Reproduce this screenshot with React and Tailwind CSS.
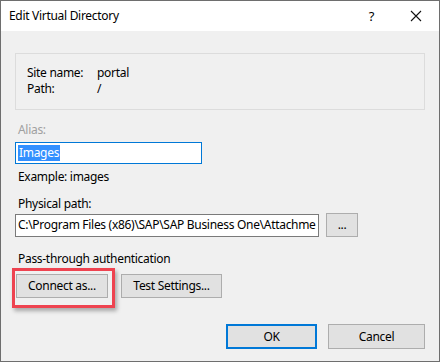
import React from "react"

function Button({ children, className = "", primary = false }) {
  return (
    <div
      className={`flex items-center justify-center bg-[#e1e1e1] text-black ${
        primary ? "border-2 border-[#0078d7]" : "border border-[#adadad]"
      } ${className}`}
    >
      {children}
    </div>
  )
}

export default function App() {
  return (
    <div
      className="w-[440px] h-[362px] bg-[#f0f0f0] border border-[#6e6e6e] text-[12px] leading-[16px] tracking-[-0.3px] text-black flex flex-col overflow-hidden"
      style={{ fontFamily: '"Noto Sans", "Liberation Sans", sans-serif' }}
    >
      {/* Title bar */}
      <div className="h-[30px] bg-white flex items-center shrink-0">
        <span className="ml-[8px] text-[12px]">Edit Virtual Directory</span>
        <span className="ml-auto mr-[36px] text-[13px]">?</span>
        <svg className="mr-[17px]" width="12" height="12" viewBox="0 0 12 12">
          <path d="M1 1 L11 11 M11 1 L1 11" stroke="#111" strokeWidth="1.1" fill="none" />
        </svg>
      </div>

      {/* Site info group */}
      <div className="mt-[22px] ml-[14px] w-[410px] h-[57px] border border-[#dcdcdc] pt-[11px] pl-[11px]">
        <div className="flex">
          <span className="w-[70px]">Site name:</span>
          <span>portal</span>
        </div>
        <div className="flex">
          <span className="w-[70px]">Path:</span>
          <span>/</span>
        </div>
      </div>

      {/* Alias */}
      <div className="ml-[17px] mt-[12px] text-[#a0a0a0]">Alias:</div>
      <div className="ml-[14px] mt-[4px] w-[187px] h-[22px] bg-white border border-[#0078d7] flex items-center pl-[2px]">
        <span className="bg-[#3390ff] text-white px-[1px]">Images</span>
      </div>
      <div className="ml-[17px] mt-[5px]">Example: images</div>

      {/* Physical path */}
      <div className="ml-[17px] mt-[11px]">Physical path:</div>
      <div className="ml-[14px] mt-[1px] flex items-center">
        <div className="w-[304px] h-[23px] bg-white border border-[#7a7a7a] flex items-center pl-[2px] overflow-hidden whitespace-nowrap">
          <span>C:\Program Files (x86)\SAP\SAP Business One\Attachme</span>
        </div>
        <Button className="ml-[7px] w-[32px] h-[24px]">...</Button>
      </div>

      {/* Pass-through */}
      <div className="ml-[17px] mt-[14px]">Pass-through authentication</div>
      <div className="ml-[15px] mt-[7px] flex gap-[13px]">
        <div className="relative">
          <Button className="w-[92px] h-[24px]">Connect as...</Button>
          <div className="absolute left-[-4px] top-[-6px] w-[103px] h-[40px] border-[3px] border-[#ee4350] shadow-[2px_3px_4px_rgba(0,0,0,0.3)]" />
        </div>
        <Button className="w-[101px] h-[24px]">Test Settings...</Button>
      </div>

      {/* Footer */}
      <div className="mt-[26px] ml-[225px] flex gap-[11px]">
        <Button primary className="w-[91px] h-[25px]">OK</Button>
        <Button className="w-[97px] h-[25px]">Cancel</Button>
      </div>
    </div>
  )
}
